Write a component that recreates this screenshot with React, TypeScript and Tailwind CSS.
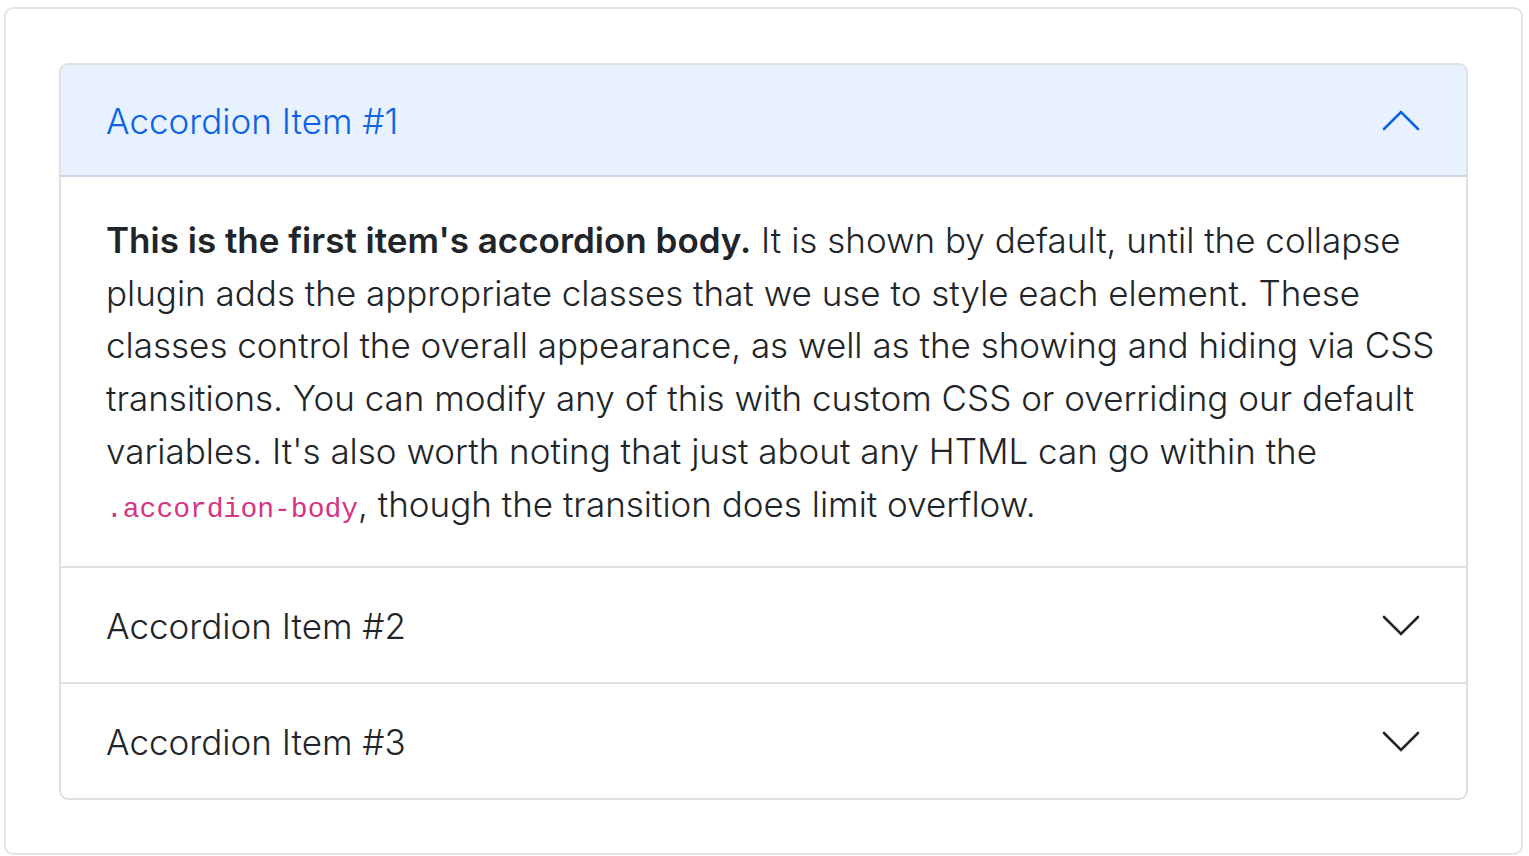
import React from "react";

const FONT = 'Inter, "Noto Sans", sans-serif';

function Chevron({ up, color }: { up?: boolean; color: string }) {
  return (
    <svg width="38" height="21" viewBox="0 0 38 21" fill="none" className="shrink-0">
      {up ? (
        <polyline points="2,19 19,2 36,19" stroke={color} strokeWidth="2.6" strokeLinecap="round" strokeLinejoin="miter" />
      ) : (
        <polyline points="2,2 19,19 36,2" stroke={color} strokeWidth="2.6" strokeLinecap="round" strokeLinejoin="miter" />
      )}
    </svg>
  );
}

export default function App() {
  return (
    <div className="bg-white w-[1529px] h-[856px] overflow-hidden pt-[7px] pl-[4px]" style={{ fontFamily: FONT }}>
      <div className="w-[1519px] h-[848px] border-2 border-[#e1e4e8] rounded-[9px] px-[53px] pt-[54px]">
        <div className="border-2 border-[#dfe0e1] rounded-[9px] overflow-hidden">
          {/* Item 1 */}
          <div className="h-[112px] bg-[#e7f1ff] border-b-2 border-[#cbd4e0] flex items-center justify-between pl-[45px] pr-[46px]">
            <span className="text-[35px] leading-none text-[#0c63e4] font-light pt-[3px]">Accordion Item #1</span>
            <Chevron up color="#0c63e4" />
          </div>
          <div className="h-[389px] pt-[37px] pl-[45px] pr-[10px] text-[35px] leading-[52.7px] text-[#212529] whitespace-nowrap font-light">
            <strong className="font-semibold">This is the first item's accordion body.</strong> It is shown by default, until the collapse
            <br />
            plugin adds the appropriate classes that we use to style each element. These
            <br />
            classes control the overall appearance, as well as the showing and hiding via CSS
            <br />
            transitions. You can modify any of this with custom CSS or overriding our default
            <br />
            variables. It's also worth noting that just about any HTML can go within the
            <br />
            <code className="text-[#d63384] text-[28px] leading-none font-normal" style={{ fontFamily: '"Liberation Mono", monospace' }}>
              .accordion-body
            </code>
            , though the transition does limit overflow.
          </div>
          {/* Item 2 */}
          <div className="h-[116px] border-t-2 border-[#dfe0e1] flex items-center justify-between pl-[45px] pr-[46px]">
            <span className="text-[35px] leading-none text-[#212529] font-light pt-[3px]">Accordion Item #2</span>
            <Chevron color="#212529" />
          </div>
          {/* Item 3 */}
          <div className="h-[116px] border-t-2 border-[#dfe0e1] flex items-center justify-between pl-[45px] pr-[46px]">
            <span className="text-[35px] leading-none text-[#212529] font-light pt-[3px]">Accordion Item #3</span>
            <Chevron color="#212529" />
          </div>
        </div>
      </div>
    </div>
  );
}
